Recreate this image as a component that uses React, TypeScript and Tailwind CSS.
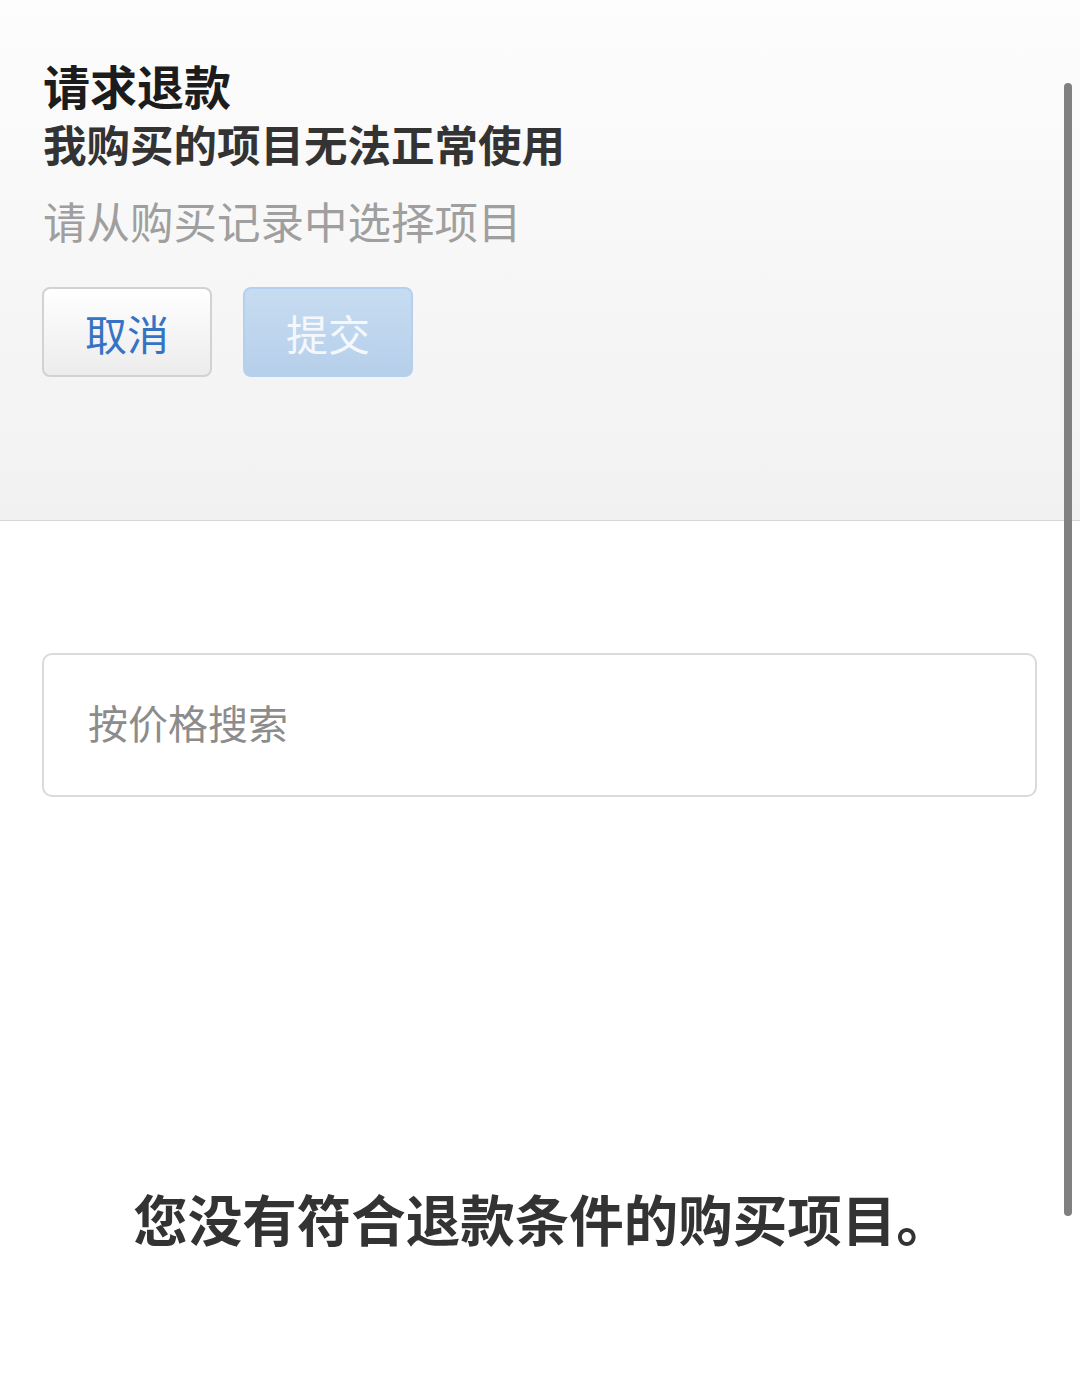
import React from 'react';

const font = { fontFamily: '"Noto Sans CJK SC", "Noto Sans", sans-serif' };

const App: React.FC = () => {
  return (
    <div className="relative w-[1080px] h-[1399px] bg-white overflow-hidden" style={font}>
      {/* header */}
      <div className="h-[521px] border-b border-[#d6d6d6] bg-gradient-to-b from-[#fdfdfd] to-[#f1f1f1] pl-[43px] pt-[56px]">
        <h1 className="text-[47px] leading-[58px] font-bold text-[#1c1c1c]">请求退款</h1>
        <h2 className="text-[43.5px] leading-[60px] font-bold text-[#333333]">我购买的项目无法正常使用</h2>
        <p className="mt-[17px] text-[43.5px] leading-[60px] font-normal text-[#9f9f9f]">请从购买记录中选择项目</p>
        <div className="mt-[36px] flex gap-[31px] -ml-px">
          <button className="w-[170px] h-[90px] rounded-[8px] border-2 border-[#d2d2d2] bg-gradient-to-b from-white to-[#ececec] text-[42px] text-[#3574c4]">
            取消
          </button>
          <button className="w-[170px] h-[90px] rounded-[8px] border-2 border-[#b5d0ec] bg-gradient-to-b from-[#c6dcf1] to-[#b6cfea] text-[42px] text-[#f4f8fc]">
            提交
          </button>
        </div>
      </div>

      {/* search */}
      <div className="px-[42px] pr-[43px] mt-[132px]">
        <div className="h-[144px] rounded-[10px] border-2 border-[#dadada] flex items-center pl-[44px] pb-[6px]">
          <input
            type="text"
            placeholder="按价格搜索"
            className="w-full bg-transparent outline-none text-[40px] placeholder:text-[#8c8c8c] text-[#333]"
          />
        </div>
      </div>

      {/* empty */}
      <p className="mt-[386px] pl-[4px] text-center text-[54.5px] leading-[70px] font-bold text-[#333333]">
        您没有符合退款条件的购买项目。
      </p>

      {/* scrollbar */}
      <div className="absolute left-[1064px] top-[83px] w-[8px] h-[1133px] rounded-full bg-[#808080]" />
    </div>
  );
};

export default App;
